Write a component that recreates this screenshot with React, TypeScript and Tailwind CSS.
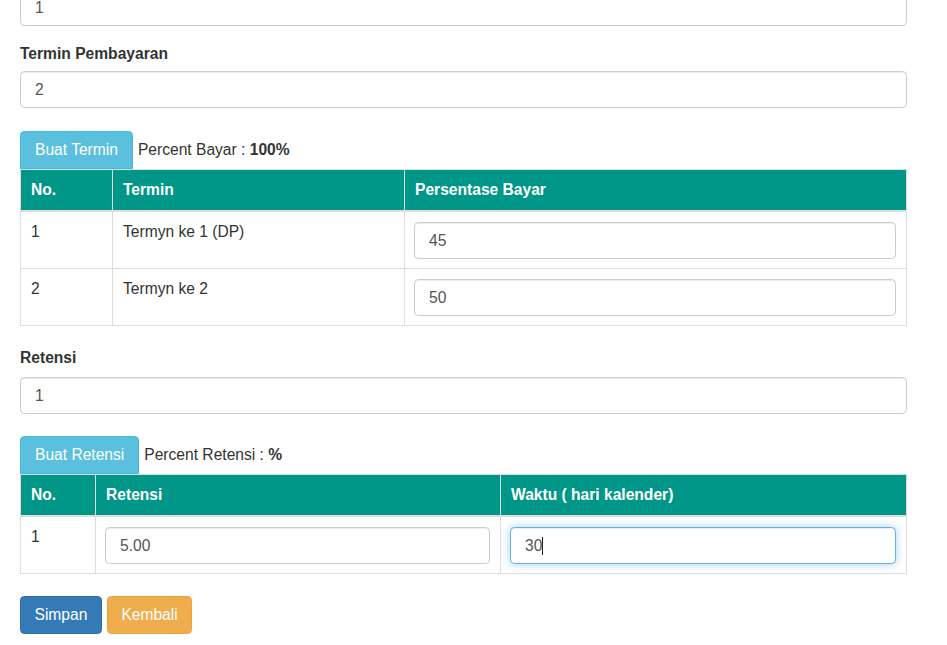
import React from "react";

const inputCls =
  "block w-full h-[37px] rounded-[4.4px] border border-[#ccc] bg-white px-[14px] text-[15.6px] text-[#555] shadow-[inset_0_1px_1px_rgba(0,0,0,0.075)] outline-none";

const thCls = "border border-[#ddd] border-b-2 px-[10px] py-[9px] text-left font-bold text-white";
const tdCls = "border border-[#ddd] px-[10px] pt-[9px] pb-[9px] align-top";
const tdInputCls = "border border-[#ddd] pl-[9px] pr-[10px] pt-[9px] pb-[9px] align-top";

function Field({ value }: { value: string }) {
  return <input className={inputCls} defaultValue={value} readOnly />;
}

function CellInput({ value }: { value: string }) {
  return <input className={`${inputCls} mt-[1px]`} defaultValue={value} readOnly />;
}

export default function App() {
  return (
    <div className="w-[907px] pl-5 font-['Liberation_Sans',Arial,sans-serif] text-[15.6px] leading-[22px] text-[#333] bg-white">
      {/* Jumlah (cut off at the top) */}
      <div className="-mt-[11px] mb-[17px]">
        <Field value="1" />
      </div>

      <label className="block font-bold mb-[6px]">Termin Pembayaran</label>
      <div className="mb-[23px]">
        <Field value="2" />
      </div>

      <div className="flex items-center">
        <button className="h-[38px] rounded-t-[4.4px] border border-[#46b8da] bg-[#5bc0de] px-[14px] text-white">
          Buat Termin
        </button>
        <span className="ml-[5px]">
          Percent Bayar : <b>100%</b>
        </span>
      </div>

      <table className="w-full table-fixed border-collapse border border-[#ddd]">
        <thead className="bg-[#009688]">
          <tr>
            <th className={`${thCls} w-[92px]`}>No.</th>
            <th className={`${thCls} w-[292px]`}>Termin</th>
            <th className={thCls}>Persentase Bayar</th>
          </tr>
        </thead>
        <tbody>
          <tr>
            <td className={tdCls}>1</td>
            <td className={tdCls}>Termyn ke 1 (DP)</td>
            <td className={tdInputCls}>
              <CellInput value="45" />
            </td>
          </tr>
          <tr>
            <td className={tdCls}>2</td>
            <td className={tdCls}>Termyn ke 2</td>
            <td className={tdInputCls}>
              <CellInput value="50" />
            </td>
          </tr>
        </tbody>
      </table>

      <label className="block font-bold mt-[21px] mb-[8px]">Retensi</label>
      <div className="mb-[22px]">
        <Field value="1" />
      </div>

      <div className="flex items-center">
        <button className="h-[38px] rounded-t-[4.4px] border border-[#46b8da] bg-[#5bc0de] px-[14px] text-white">
          Buat Retensi
        </button>
        <span className="ml-[5px]">
          Percent Retensi : <b>%</b>
        </span>
      </div>

      <table className="w-full table-fixed border-collapse border border-[#ddd]">
        <thead className="bg-[#009688]">
          <tr>
            <th className={`${thCls} w-[75px]`}>No.</th>
            <th className={`${thCls} w-[405px]`}>Retensi</th>
            <th className={thCls}>Waktu ( hari kalender)</th>
          </tr>
        </thead>
        <tbody>
          <tr>
            <td className={tdCls}>1</td>
            <td className={tdInputCls}>
              <CellInput value="5.00" />
            </td>
            <td className={tdInputCls}>
              {/* focused field with caret */}
              <div className="mt-[1px] flex h-[37px] items-center rounded-[4.4px] border border-[#66afe9] bg-white px-[14px] text-[#555] shadow-[inset_0_1px_1px_rgba(0,0,0,0.075),0_0_8px_rgba(102,175,233,0.6)]">
                <span>30</span>
                <span className="h-[18px] w-px bg-[#222]" />
              </div>
            </td>
          </tr>
        </tbody>
      </table>

      <div className="mt-[22px] flex gap-[5px] pb-[11px]">
        <button className="h-[38px] rounded-[4.4px] border border-[#2e6da4] bg-[#337ab7] px-[13.5px] text-white">
          Simpan
        </button>
        <button className="h-[38px] rounded-[4.4px] border border-[#eea236] bg-[#f0ad4e] px-[13.5px] text-white">
          Kembali
        </button>
      </div>
    </div>
  );
}
